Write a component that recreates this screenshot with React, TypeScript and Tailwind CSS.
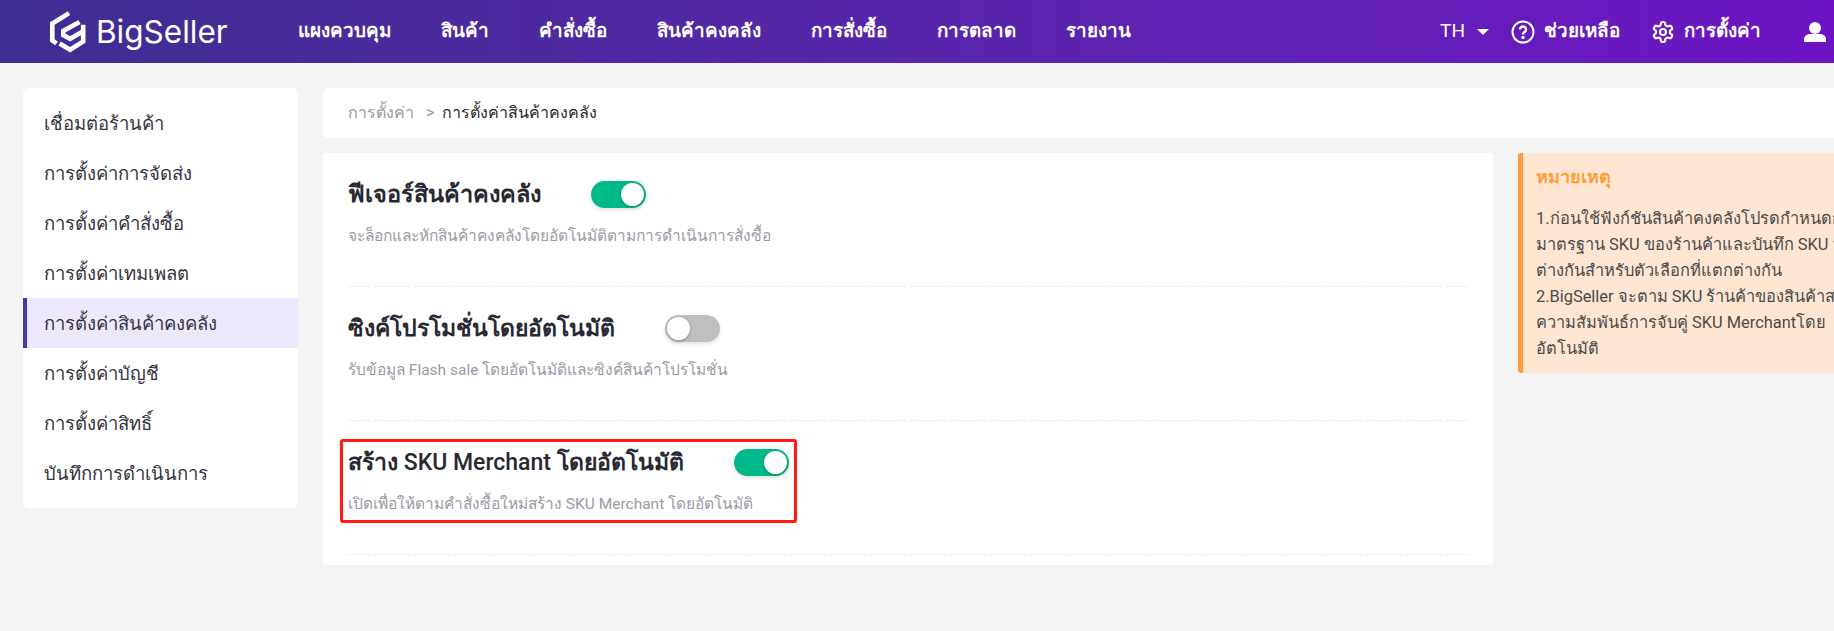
import React from "react";

const nav = ["แผงควบคุม", "สินค้า", "คำสั่งซื้อ", "สินค้าคงคลัง", "การสั่งซื้อ", "การตลาด", "รายงาน"];
const side = ["เชื่อมต่อร้านค้า", "การตั้งค่าการจัดส่ง", "การตั้งค่าคำสั่งซื้อ", "การตั้งค่าเทมเพลต", "การตั้งค่าสินค้าคงคลัง", "การตั้งค่าบัญชี", "การตั้งค่าสิทธิ์", "บันทึกการดำเนินการ"];
const notes = [
  "1.ก่อนใช้ฟังก์ชันสินค้าคงคลังโปรดกำหนดการตั้งค่า",
  "มาตรฐาน SKU ของร้านค้าและบันทึก SKU ที่แตกต่าง",
  "ต่างกันสำหรับตัวเลือกที่แตกต่างกัน",
  "2.BigSeller จะตาม SKU ร้านค้าของสินค้าสร้างความ",
  "ความสัมพันธ์การจับคู่ SKU Merchantโดย",
  "อัตโนมัติ",
];

function Toggle({ on }: { on: boolean }) {
  return (
    <span className={`flex h-[27px] w-[55px] shrink-0 items-center rounded-full p-[2px] shadow-[0_2px_4px_rgba(0,0,0,0.12)] ${on ? "justify-end bg-[#00b98b]" : "justify-start bg-[#bfbfbf]"}`}>
      <span className="h-[23px] w-[23px] rounded-full bg-white shadow-[0_1px_3px_rgba(0,0,0,0.3)]" />
    </span>
  );
}

function Row({ title, desc, on, size, boxed }: { title: React.ReactNode; desc: string; on: boolean; size: string; boxed?: boolean }) {
  return (
    <div className="relative h-[134px] border-b border-dashed border-[#ebebeb] pt-[28px]">
      <div className="flex h-[27px] items-center gap-[50px]">
        <span className={`font-bold leading-[27px] text-[#282832] ${size}`}>{title}</span>
        <Toggle on={on} />
      </div>
      <p className="mt-[17px] text-[15.5px] leading-[22px] text-[#9a9aa6]">{desc}</p>
      {boxed && <div className="absolute left-[-8px] top-[18px] h-[84px] w-[457px] rounded-[3px] border-[3px] border-[#ff1a12]" />}
    </div>
  );
}

function Logo() {
  return (
    <svg width="40" height="44" viewBox="0 0 38 42" fill="none" stroke="white" strokeWidth="4.4" strokeLinejoin="miter">
      <path d="M20 3 L4 13 V29 L8 32" />
      <path d="M30 11.5 L14.5 20 V24 L21 27.5 L34 20" />
      <path d="M33.5 14 V30 L21 38 L11 32" />
    </svg>
  );
}

export default function App() {
  return (
    <div className="h-[631px] w-full overflow-hidden bg-[#f4f4f4] font-['Roboto',sans-serif]">
      <header className="flex h-[63px] w-[1834px] items-center bg-gradient-to-r from-[#3f2d91] to-[#6d13c4] text-white">
        <div className="ml-[48px] flex w-[250px] items-center gap-[8px]">
          <Logo />
          <span className="font-['Inter',sans-serif] text-[31.5px] font-normal leading-none">BigSeller</span>
        </div>
        <nav className="flex gap-[50px] text-[18.8px] font-bold">
          {nav.map((n) => <span key={n}>{n}</span>)}
        </nav>
        <div className="ml-auto flex items-center text-[18.8px] font-bold">
          <span className="text-[19px] font-normal">TH</span>
          <span className="ml-[12px] h-0 w-0 border-x-[6px] border-t-[6px] border-x-transparent border-t-white" />
          <svg className="ml-[22px]" width="24" height="24" viewBox="0 0 24 24" fill="none" stroke="white" strokeWidth="2">
            <circle cx="12" cy="12" r="10.5" />
            <path d="M9 9.5a3 3 0 1 1 4.5 2.6c-1 .6-1.5 1.1-1.5 2.4" strokeWidth="2.4" />
            <circle cx="12" cy="17.5" r="0.7" fill="white" />
          </svg>
          <span className="ml-[9px]">ช่วยเหลือ</span>
          <svg className="ml-[31px]" width="24" height="24" viewBox="0 0 24 24" fill="none" stroke="white" strokeWidth="2.2" strokeLinecap="round" strokeLinejoin="round">
            <path d="M12.22 2h-.44a2 2 0 0 0-2 2v.18a2 2 0 0 1-1 1.73l-.43.25a2 2 0 0 1-2 0l-.15-.08a2 2 0 0 0-2.73.73l-.22.38a2 2 0 0 0 .73 2.73l.15.1a2 2 0 0 1 1 1.72v.51a2 2 0 0 1-1 1.74l-.15.09a2 2 0 0 0-.73 2.73l.22.38a2 2 0 0 0 2.73.73l.15-.08a2 2 0 0 1 2 0l.43.25a2 2 0 0 1 1 1.73V20a2 2 0 0 0 2 2h.44a2 2 0 0 0 2-2v-.18a2 2 0 0 1 1-1.73l.43-.25a2 2 0 0 1 2 0l.15.08a2 2 0 0 0 2.73-.73l.22-.39a2 2 0 0 0-.73-2.73l-.15-.08a2 2 0 0 1-1-1.74v-.5a2 2 0 0 1 1-1.74l.15-.09a2 2 0 0 0 .73-2.73l-.22-.38a2 2 0 0 0-2.73-.73l-.15.08a2 2 0 0 1-2 0l-.43-.25a2 2 0 0 1-1-1.73V4a2 2 0 0 0-2-2z" />
            <circle cx="12" cy="12" r="3" />
          </svg>
          <span className="ml-[9px]">การตั้งค่า</span>
          <svg className="ml-[43px] mr-[8px]" width="22" height="22" viewBox="0 0 22 22" fill="white">
            <circle cx="11" cy="7" r="6" />
            <path d="M0 21v-3c0-3 3-5 7-5h8c4 0 7 2 7 5v3z" />
          </svg>
        </div>
      </header>
      <div className="flex w-[1950px] items-start gap-[25px] pl-[23px] pt-[25px]">
        <aside className="w-[275px] shrink-0 rounded-[6px] bg-white py-[10px] text-[18.5px] text-[#33333d]">
          {side.map((s, i) => (
            <div key={s} className={`flex h-[50px] items-center pt-[4px] ${i === 4 ? "border-l-4 border-[#4a35b0] bg-[#eee8fd] pl-[17px]" : "pl-[21px]"}`}>{s}</div>
          ))}
        </aside>
        <div className="w-[1602px] shrink-0">
          <div className="flex h-[50px] items-center rounded-[6px] bg-white pl-[25px] text-[16px]">
            <span className="text-[#999]">การตั้งค่า</span>
            <span className="ml-[12px] text-[#999]">&gt;</span>
            <span className="ml-[8px] font-medium text-[#282832]">การตั้งค่าสินค้าคงคลัง</span>
          </div>
          <div className="mt-[15px] flex items-start gap-[25px]">
            <main className="h-[412px] w-[1170px] shrink-0 rounded-[3px] bg-white px-[25px]">
              <Row size="text-[23.5px]" title="ฟีเจอร์สินค้าคงคลัง" desc="จะล็อกและหักสินค้าคงคลังโดยอัตโนมัติตามการดำเนินการสั่งซื้อ" on />
              <Row size="text-[23px]" title="ซิงค์โปรโมชั่นโดยอัตโนมัติ" desc="รับข้อมูล Flash sale โดยอัตโนมัติและซิงค์สินค้าโปรโมชั่น" on={false} />
              <Row
                size="text-[23px]"
                title={<>สร้าง <span className="font-medium">SKU Merchant</span> โดยอัตโนมัติ</>}
                desc="เปิดเพื่อให้ตามคำสั่งซื้อใหม่สร้าง SKU Merchant โดยอัตโนมัติ"
                on
                boxed
              />
            </main>
            <div className="h-[220px] w-[400px] shrink-0 rounded-[3px] border-l-[5px] border-[#ff9d3b] bg-[#fee6d3] pl-[13px] pt-[11px]">
              <div className="text-[18px] font-bold leading-[26px] text-[#ff9d3b]">หมายเหตุ</div>
              <div className="mt-[16px] text-[16.4px] leading-[26px] text-[#4a4a4a]">
                {notes.map((n) => <div key={n} className="whitespace-nowrap">{n}</div>)}
              </div>
            </div>
          </div>
        </div>
      </div>
    </div>
  );
}
